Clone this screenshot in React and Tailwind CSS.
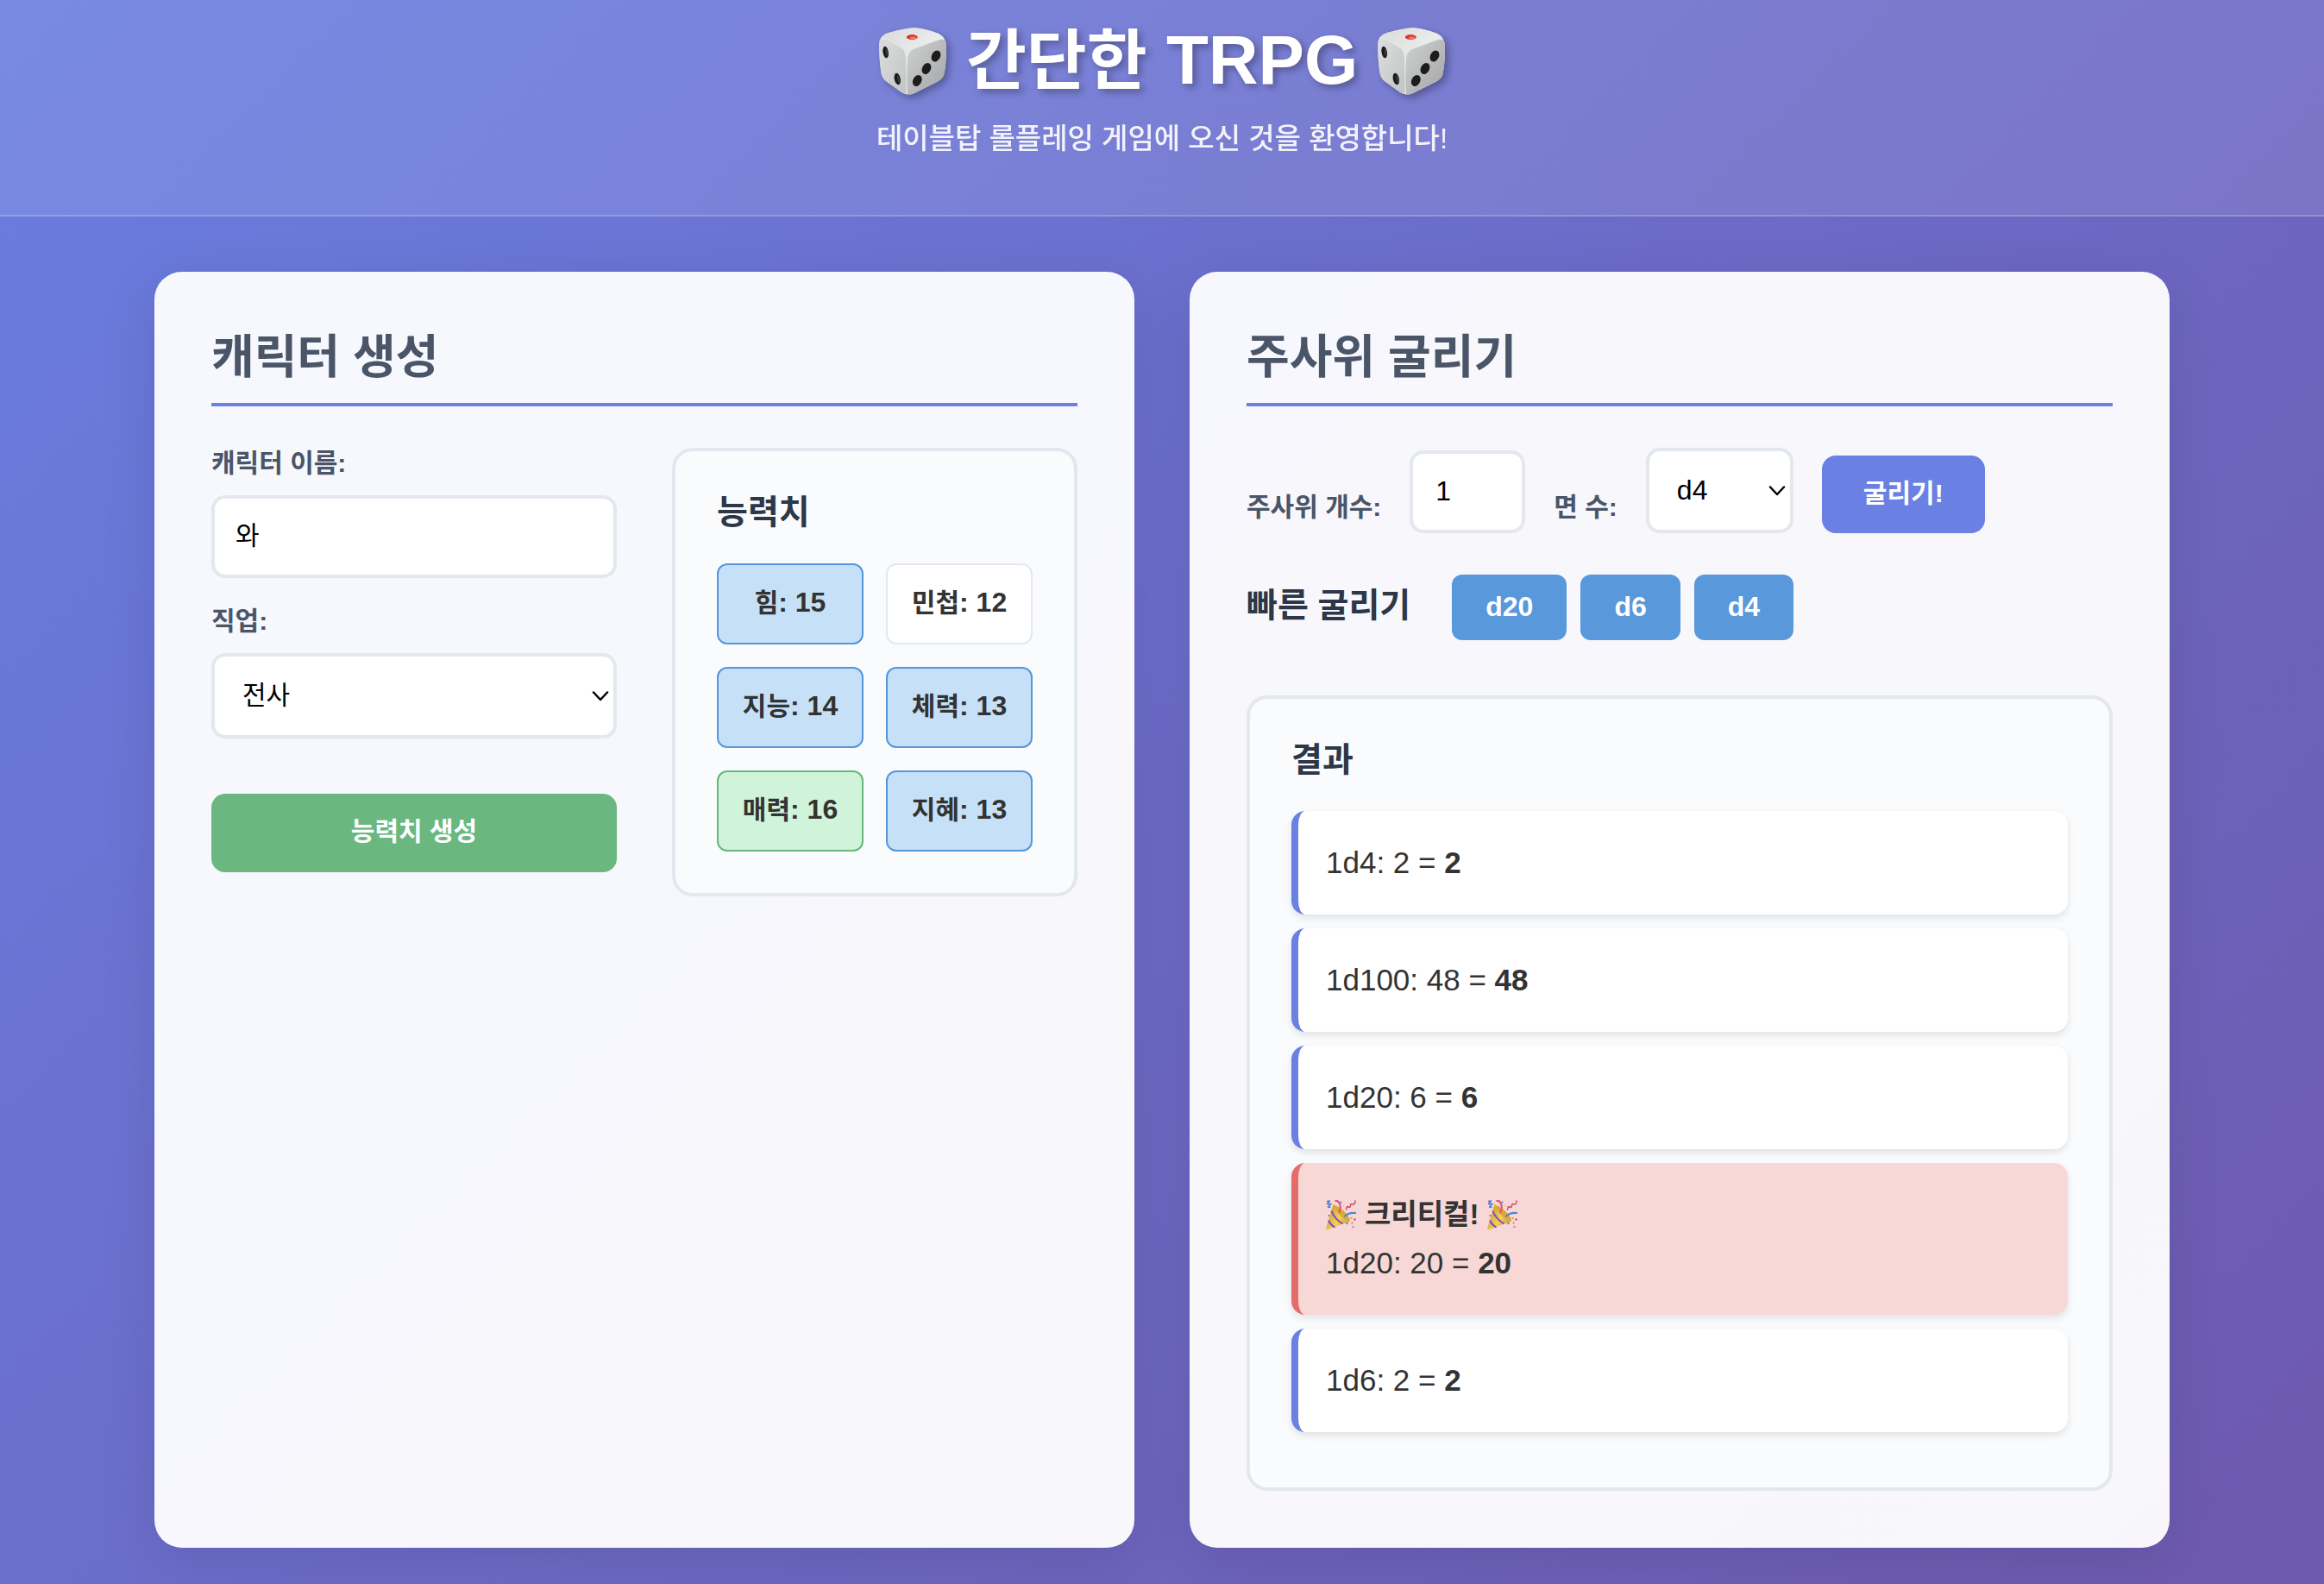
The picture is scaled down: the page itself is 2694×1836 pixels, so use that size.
import React, { useState } from "react";

const abilities = [
  { name: "힘", value: 15, tone: "good" },
  { name: "민첩", value: 12, tone: "plain" },
  { name: "지능", value: 14, tone: "good" },
  { name: "체력", value: 13, tone: "good" },
  { name: "매력", value: 16, tone: "great" },
  { name: "지혜", value: 13, tone: "good" },
];

const abilityTones = {
  plain: "border-[#e2e8f0] bg-white",
  good: "border-[#5596dc] bg-[#c6e1f7]",
  great: "border-[#66b87b] bg-[#d0f4d9]",
};

const rolls = [
  { dice: "1d4", rolled: "2", total: "2" },
  { dice: "1d100", rolled: "48", total: "48" },
  { dice: "1d20", rolled: "6", total: "6" },
  { dice: "1d20", rolled: "20", total: "20", critical: true },
  { dice: "1d6", rolled: "2", total: "2" },
];

const fieldBox =
  "block w-full rounded-2xl border-4 border-[#e2e8ee] bg-white text-black outline-none focus:border-[#6a80e3]";

function Die() {
  return (
    <svg
      viewBox="0 0 80 80"
      className="size-20 shrink-0 drop-shadow-[4px_4px_4px_rgba(0,0,0,0.3)]"
      role="img"
      aria-label="주사위"
    >
      <defs>
        <linearGradient id="dieLeft" x1="0" y1="0" x2="1" y2="1">
          <stop offset="0" stopColor="#dcdddd" />
          <stop offset="1" stopColor="#c3c4c5" />
        </linearGradient>
        <linearGradient id="dieRight" x1="0" y1="0" x2="1" y2="1">
          <stop offset="0" stopColor="#d0d1d1" />
          <stop offset="1" stopColor="#a3a4a6" />
        </linearGradient>
        <linearGradient id="dieTop" x1="0" y1="0" x2="1" y2="0.4">
          <stop offset="0" stopColor="#dadbdb" />
          <stop offset="1" stopColor="#ececec" />
        </linearGradient>
      </defs>
      <path
        d="M12 7 Q30 2 42 1.3 Q56 2.5 70 8 Q79 12 79 24 Q79 40 77 52 Q76 60 69 63.500 L42 77 Q34 80.500 27 76 L9 63 Q4 59 3.300 52 Q1 38 1.200 20 Q1.500 10 12 7Z"
        fill="#e6e7e7"
      />
      <path
        d="M1.500 16 Q4 12 12 16 L26 24 Q31.500 27 31.800 35 Q33 56 32.500 78 Q29.500 77.500 27 76 L9 63 Q4 59 3.300 52 Q1 36 1.500 16Z"
        fill="url(#dieLeft)"
      />
      <path
        d="M34 78.500 Q33 56 34 37 Q34.500 29 41 26 L70 15.500 Q78 13 79 20 Q79.500 38 77 52 Q76 60 69 63.500 L42 77 Q38 79 34 78.500Z"
        fill="url(#dieRight)"
      />
      <path
        d="M12 7 Q30 2 42 1.300 Q56 2.500 70 8 Q77 11.500 70 14.500 L42 24.500 Q33 27.500 26 23 L7 13 Q2.500 10 12 7Z"
        fill="url(#dieTop)"
      />
      <ellipse cx="39.300" cy="12" rx="6.500" ry="3" fill="#d8352e" />
      <ellipse cx="40.500" cy="13" rx="3.500" ry="1.400" fill="#ee7a70" />
      <g fill="#1c1c1c">
        <ellipse cx="8.700" cy="29.500" rx="3.200" ry="6.800" transform="rotate(-10 8.700 29.500)" />
        <ellipse cx="22.300" cy="60.500" rx="3.500" ry="6.800" transform="rotate(-12 22.300 60.500)" />
        <ellipse cx="67" cy="34" rx="5" ry="6.800" transform="rotate(28 67 34)" />
        <ellipse cx="56" cy="48.500" rx="5" ry="6.800" transform="rotate(28 56 48.500)" />
        <ellipse cx="45.300" cy="62.500" rx="5" ry="6.800" transform="rotate(28 45.300 62.500)" />
      </g>
      <g fill="#3f3f3f">
        <ellipse cx="10" cy="29.500" rx="1" ry="4" transform="rotate(-10 10 29.500)" />
        <ellipse cx="23.600" cy="60.500" rx="1" ry="4" transform="rotate(-12 23.600 60.500)" />
      </g>
    </svg>
  );
}

function PartyPopper() {
  return (
    <svg viewBox="0 0 35 35" className="size-[35px] shrink-0" role="img" aria-label="축하">
      <defs>
        <linearGradient id="cone" x1="0" y1="0.300" x2="1" y2="0.900">
          <stop offset="0" stopColor="#c99a2e" />
          <stop offset="0.500" stopColor="#f3d154" />
          <stop offset="1" stopColor="#c8922c" />
        </linearGradient>
      </defs>
      <path d="M8.500 5.500 Q17 8 22 14 Q27 19 28 24.500 L3 34 Q-0.500 35 0.300 32Z" fill="url(#cone)" />
      <path d="M8.500 5.500 Q17 8 22 14 Q27 19 28 24.500 Q20 23 15 16 Q10 10 8.500 5.500Z" fill="#d9a93a" />
      <path d="M6.400 12.500 Q9.500 21.500 19.500 27.500" fill="none" stroke="#8146cf" strokeWidth="2" />
      <path d="M3 23.500 Q5.500 29 10.500 31.500" fill="none" stroke="#8146cf" strokeWidth="2" />
      <path d="M15.500 14 Q18 8 15.500 3 Q13.500 0.500 11.500 1" fill="none" stroke="#e05578" strokeWidth="2.200" strokeLinecap="round" />
      <path d="M22 18.500 Q27 14 34.500 15" fill="none" stroke="#4b86e0" strokeWidth="2.200" strokeLinecap="round" />
      <path d="M1 1.500 L4.500 1 L1.500 4.500 L6 4.500 L2.500 8 L5.500 8.500" fill="none" stroke="#4b78dc" strokeWidth="1.500" strokeLinejoin="round" />
      <path d="M23.500 11 Q24 6 26 8 Q28.500 9.500 28.500 6 Q29 3.500 31 5 Q34 5 34 1" fill="none" stroke="#cf4a70" strokeWidth="1.500" strokeLinecap="round" />
      <g>
        <circle cx="8.500" cy="5" r="1" fill="#f0c93f" />
        <circle cx="17.500" cy="2.500" r="1.100" fill="#4b86e0" />
        <circle cx="20.500" cy="6.500" r="1" fill="#f0c93f" />
        <circle cx="3.500" cy="18" r="1.100" fill="#cf4a70" />
        <circle cx="29.500" cy="21" r="1.200" fill="#dba045" />
        <circle cx="33.500" cy="22.500" r="1.200" fill="#cf4a70" />
        <circle cx="24.500" cy="27" r="1.200" fill="#4b86e0" />
        <circle cx="30.500" cy="26.500" r="1.200" fill="#dba045" />
        <circle cx="31.500" cy="31" r="1.300" fill="#d686b5" />
      </g>
    </svg>
  );
}

function Chevron() {
  return (
    <svg
      viewBox="0 0 20 12"
      className="pointer-events-none absolute top-1/2 right-[9px] h-3 w-5 -translate-y-1/2"
      fill="none"
      stroke="black"
      strokeWidth="2.500"
      strokeLinecap="round"
      strokeLinejoin="round"
      aria-hidden="true"
    >
      <path d="M2 1.500 L10 10 L18 1.500" />
    </svg>
  );
}

function SelectBox({ id, options, size }) {
  return (
    <div className="relative">
      <select id={id} className={`${fieldBox} ${size} h-[99px] appearance-none pr-10 pb-0.5 pl-8`}>
        {options.map((option) => (
          <option key={option}>{option}</option>
        ))}
      </select>
      <Chevron />
    </div>
  );
}

function Card({ title, children }) {
  return (
    <section className="rounded-[32px] bg-white/95 p-[66px] shadow-[0_16px_64px_rgba(0,0,0,0.1)]">
      <h2 className="mb-12 border-b-4 border-[#6a80e3] pb-5 text-[54px] leading-[66px] font-bold text-[#4a5568]">
        {title}
      </h2>
      {children}
    </section>
  );
}

export default function App() {
  const [name, setName] = useState("와");
  const [count, setCount] = useState(1);

  return (
    <div className="min-h-screen bg-[linear-gradient(135deg,#697de0_0%,#6e59ae_100%)] font-['Liberation_Sans','Noto_Sans_CJK_KR',sans-serif] text-[#333333]">
      <header className="border-b-2 border-white/20 bg-white/10 pt-[22px] pb-[60px] text-center text-white">
        <h1 className="flex items-center justify-center gap-[22px] text-[80px] leading-[96px] font-bold">
          <Die />
          <span className="[text-shadow:4px_4px_8px_rgba(0,0,0,0.3)]">
            <span className="text-[76px]">간단한</span> TRPG
          </span>
          <Die />
        </h1>
        <p className="mt-3.5 text-[33px] leading-[56px] font-medium opacity-90">
          테이블탑 롤플레잉 게임에 오신 것을 환영합니다!
        </p>
      </header>

      <main className="mx-auto grid max-w-[2400px] grid-cols-2 gap-16 px-8 pt-16 pb-10">
        <Card title="캐릭터 생성">
          <div className="grid grid-cols-2 items-start gap-16">
            <form className="text-[30px]" onSubmit={(e) => e.preventDefault()}>
              <label htmlFor="name" className="mb-5 block leading-[35px] font-bold text-[#4a5568]">
                캐릭터 이름:
              </label>
              <input
                id="name"
                type="text"
                value={name}
                onChange={(e) => setName(e.target.value)}
                className={`${fieldBox} h-24 px-6 pb-2`}
              />
              <label htmlFor="job" className="mt-8 mb-5 block leading-[35px] font-bold text-[#4a5568]">
                직업:
              </label>
              <SelectBox id="job" size="text-[30px]" options={["전사", "마법사", "도적", "성직자"]} />
              <button
                type="submit"
                className="mt-16 block h-[91px] w-full rounded-2xl bg-[#6ab87f] pb-1 font-bold text-white"
              >
                능력치 생성
              </button>
            </form>

            <div className="rounded-3xl border-4 border-[#e2e8ee] bg-[#f9fbfd] p-12">
              <h3 className="mb-9 text-[39px] leading-[46px] font-bold text-[#2d3748]">능력치</h3>
              <ul className="grid grid-cols-2 gap-[26px]">
                {abilities.map((a) => (
                  <li
                    key={a.name}
                    className={`flex h-[94px] items-center justify-center rounded-xl border-2 pb-1 text-[32px] leading-[50px] font-bold whitespace-pre ${abilityTones[a.tone]}`}
                  >
                    <span>
                      <span className="text-[30px]">{a.name}</span>: {a.value}
                    </span>
                  </li>
                ))}
              </ul>
            </div>
          </div>
        </Card>

        <Card title="주사위 굴리기">
          <form className="flex items-end gap-[33px] text-[32px]" onSubmit={(e) => e.preventDefault()}>
            <label htmlFor="count" className="text-[30px] leading-[60px] font-bold text-[#4a5568]">
              주사위 개수:
            </label>
            <div className="w-[134px]">
              <input
                id="count"
                type="number"
                min="1"
                value={count}
                onChange={(e) => setCount(e.target.value)}
                className={`${fieldBox} h-24 pb-0.5 pl-[26px]`}
              />
            </div>
            <label htmlFor="sides" className="text-[30px] leading-[60px] font-bold text-[#4a5568]">
              면 수:
            </label>
            <div className="w-[171px]">
              <SelectBox id="sides" size="text-[32px]" options={["d4", "d6", "d20", "d100"]} />
            </div>
            <button
              type="submit"
              className="h-[90px] rounded-2xl bg-[#6a80e3] px-12 pb-1 text-[30px] font-bold text-white"
            >
              굴리기!
            </button>
          </form>

          <div className="mt-12 flex items-center gap-12">
            <h3 className="pb-1 text-[39px] leading-[46px] font-bold text-[#2d3748]">빠른 굴리기</h3>
            <div className="flex gap-4">
              {["d20", "d6", "d4"].map((die) => (
                <button
                  key={die}
                  type="button"
                  className="h-[76px] rounded-xl bg-[#5898db] px-[39px] pb-0.5 text-[32px] font-bold text-white"
                >
                  {die}
                </button>
              ))}
            </div>
          </div>

          <div className="mt-16 rounded-3xl border-4 border-[#e2e8ee] bg-[#f9fbfd] p-12 pb-16">
            <h3 className="mb-9 text-[39px] leading-[46px] font-bold text-[#2d3748]">결과</h3>
            <ul className="flex flex-col gap-4 text-[35px] leading-[56px]">
              {rolls.map((roll, i) => (
                <li
                  key={i}
                  className={`rounded-2xl border-l-8 p-8 shadow-[0_4px_8px_rgba(0,0,0,0.1)] ${
                    roll.critical ? "border-[#e66c6a] bg-[#f7d8d6]" : "border-[#6a80e3] bg-white"
                  }`}
                >
                  {roll.critical && (
                    <div className="flex items-center gap-2.5 text-[33px] font-bold">
                      <PartyPopper />
                      크리티컬!
                      <PartyPopper />
                    </div>
                  )}
                  {roll.dice}: {roll.rolled} = <strong>{roll.total}</strong>
                </li>
              ))}
            </ul>
          </div>
        </Card>
      </main>
    </div>
  );
}
